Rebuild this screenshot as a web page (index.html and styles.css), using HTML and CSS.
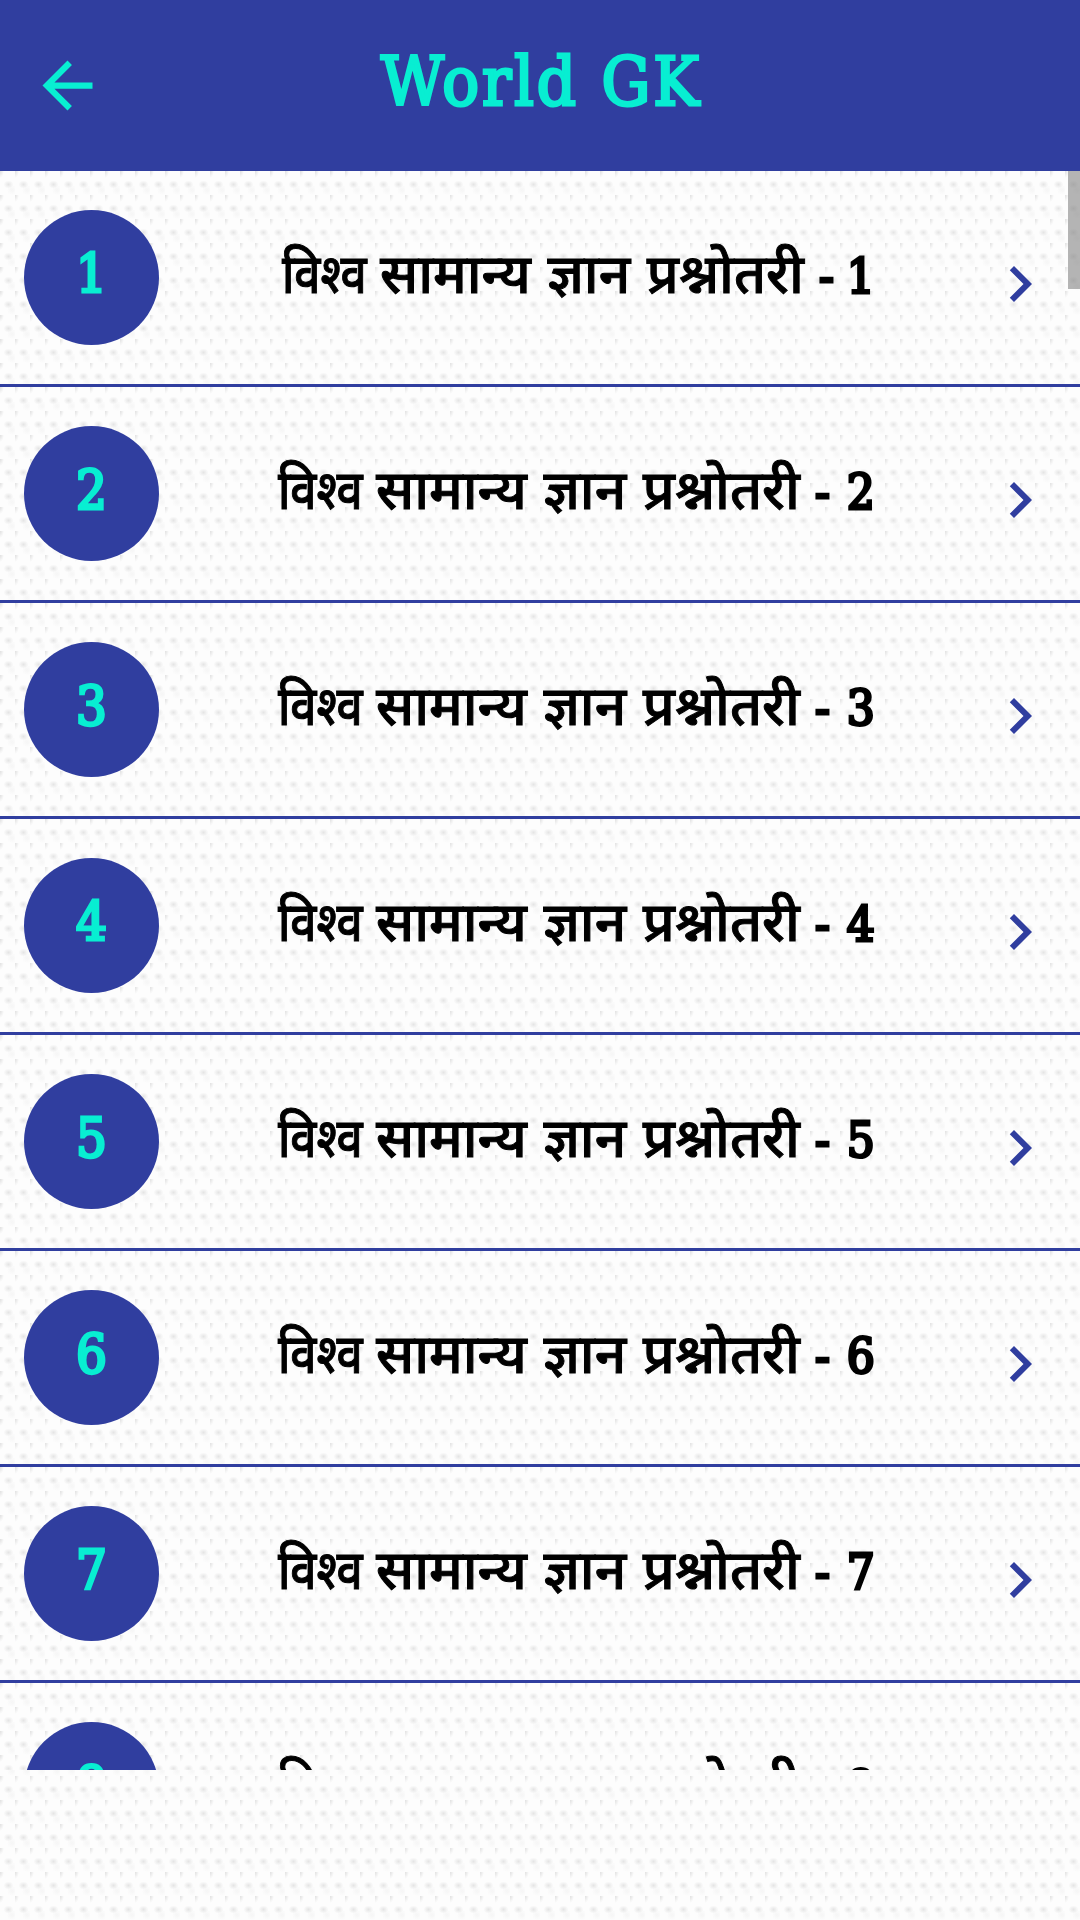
FILE: index.html
```
<!DOCTYPE html>
<html lang="hi">

<head>
    <meta charset="UTF-8">
    <meta name="viewport" content="width=device-width, initial-scale=1.0">
    <title>World GK</title>
    <link rel="stylesheet" href="styles.css">
</head>

<body>
    <div class="header">
        <svg class="back-icon" viewBox="0 0 24 24"><path d="M20 11H7.83l5.59-5.59L12 4l-8 8 8 8 1.41-1.41L7.83 13H20v-2z"/></svg>
        <h1 class="title"><span>World GK</span></h1>
    </div>

    <div class="list">
        <div class="item">
            <div class="number"><span>1</span></div>
            <div class="name"><span class="first">विश्व</span> <span class="hindi">सामान्य ज्ञान प्रश्नोतरी</span><span class="dash">-</span><span class="digit">1</span></div>
            <svg class="chevron" viewBox="0 0 24 24"><path d="M10 6L8.59 7.41 13.17 12l-4.58 4.59L10 18l6-6z"/></svg>
        </div>
        <div class="item">
            <div class="number"><span>2</span></div>
            <div class="name"><span class="first">विश्व</span> <span class="hindi">सामान्य ज्ञान प्रश्नोतरी</span><span class="dash">-</span><span class="digit">2</span></div>
            <svg class="chevron" viewBox="0 0 24 24"><path d="M10 6L8.59 7.41 13.17 12l-4.58 4.59L10 18l6-6z"/></svg>
        </div>
        <div class="item">
            <div class="number"><span>3</span></div>
            <div class="name"><span class="first">विश्व</span> <span class="hindi">सामान्य ज्ञान प्रश्नोतरी</span><span class="dash">-</span><span class="digit">3</span></div>
            <svg class="chevron" viewBox="0 0 24 24"><path d="M10 6L8.59 7.41 13.17 12l-4.58 4.59L10 18l6-6z"/></svg>
        </div>
        <div class="item">
            <div class="number"><span>4</span></div>
            <div class="name"><span class="first">विश्व</span> <span class="hindi">सामान्य ज्ञान प्रश्नोतरी</span><span class="dash">-</span><span class="digit">4</span></div>
            <svg class="chevron" viewBox="0 0 24 24"><path d="M10 6L8.59 7.41 13.17 12l-4.58 4.59L10 18l6-6z"/></svg>
        </div>
        <div class="item">
            <div class="number"><span>5</span></div>
            <div class="name"><span class="first">विश्व</span> <span class="hindi">सामान्य ज्ञान प्रश्नोतरी</span><span class="dash">-</span><span class="digit">5</span></div>
            <svg class="chevron" viewBox="0 0 24 24"><path d="M10 6L8.59 7.41 13.17 12l-4.58 4.59L10 18l6-6z"/></svg>
        </div>
        <div class="item">
            <div class="number"><span>6</span></div>
            <div class="name"><span class="first">विश्व</span> <span class="hindi">सामान्य ज्ञान प्रश्नोतरी</span><span class="dash">-</span><span class="digit">6</span></div>
            <svg class="chevron" viewBox="0 0 24 24"><path d="M10 6L8.59 7.41 13.17 12l-4.58 4.59L10 18l6-6z"/></svg>
        </div>
        <div class="item">
            <div class="number"><span>7</span></div>
            <div class="name"><span class="first">विश्व</span> <span class="hindi">सामान्य ज्ञान प्रश्नोतरी</span><span class="dash">-</span><span class="digit">7</span></div>
            <svg class="chevron" viewBox="0 0 24 24"><path d="M10 6L8.59 7.41 13.17 12l-4.58 4.59L10 18l6-6z"/></svg>
        </div>
        <div class="item">
            <div class="number"><span>8</span></div>
            <div class="name"><span class="first">विश्व</span> <span class="hindi">सामान्य ज्ञान प्रश्नोतरी</span><span class="dash">-</span><span class="digit">8</span></div>
            <svg class="chevron" viewBox="0 0 24 24"><path d="M10 6L8.59 7.41 13.17 12l-4.58 4.59L10 18l6-6z"/></svg>
        </div>
        <div class="scrollbar"></div>
    </div>
</body>

</html>
```
FILE: styles.css
```
* {
    box-sizing: border-box;
}

body {
    margin: 0;
    height: 1920px;
    overflow: hidden;
    font-family: "DejaVu Serif Condensed", "DejaVu Serif", "Noto Sans", serif;
}

/* dotted paper texture, one 15x24 tile */
body,
.list {
    background-color: #fdfdfd;
    background-image:
        radial-gradient(ellipse 5px 4px at 8.5px 13.5px, #e5e5e5, transparent),
        radial-gradient(ellipse 4px 7px at 0 0, #e0e0e0, transparent),
        radial-gradient(ellipse 5px 5px at 12px 19px, #f5f5f5, transparent);
    background-size: 15px 24px;
}

.header {
    display: flex;
    align-items: center;
    height: 171px;
    padding: 0 105px 0 30px;
    background: #303e9f;
    color: #08eed2;
}

.back-icon {
    flex: none;
    width: 75px;
    height: 75px;
    fill: #08eed2;
}

.title {
    flex: 1;
    margin: 0;
    padding: 0 0 7px 3px;
    text-align: center;
    font-size: 68px;
    font-weight: normal;
    line-height: 84px;
    letter-spacing: 3px;
    -webkit-text-stroke: 3px #08eed2;
}

.list {
    position: relative;
    height: 1599px;
    overflow: hidden;
}

.item {
    display: flex;
    align-items: center;
    height: 216px;
    padding: 0 24px;
    border-bottom: 3px solid #303e9f;
}

.number {
    flex: none;
    display: flex;
    align-items: center;
    justify-content: center;
    width: 135px;
    height: 135px;
    padding-bottom: 6px;
    border-radius: 50%;
    background: #303e9f;
    color: #08eed2;
    font-size: 54px;
    -webkit-text-stroke: 3px #08eed2;
}

.name {
    flex: 1;
    display: flex;
    align-items: baseline;
    padding: 0 0 4px 119px;
    font-size: 54px;
    line-height: 80px;
    white-space: nowrap;
}

.item:first-child .name {
    padding-left: 123px;
}

.first,
.hindi {
    font-weight: 500;
    -webkit-text-stroke: 1px #000;
}

.first {
    width: 98px;
    transform: scaleX(0.85);
    transform-origin: left;
}

.hindi {
    font-size: 55px;
    word-spacing: 1px;
}

.dash,
.digit {
    margin-left: 15px;
    font-size: 49px;
    -webkit-text-stroke: 3px #000;
}

.digit {
    margin-left: 17px;
}

.item:first-child .digit {
    margin-left: 13px;
}

.chevron {
    flex: none;
    width: 72px;
    height: 72px;
    margin: 13px 0 0;
    fill: #303e9f;
}

.scrollbar {
    position: absolute;
    top: 0;
    right: 0;
    width: 12px;
    height: 118px;
    background: rgba(120, 120, 120, 0.55);
}
```
